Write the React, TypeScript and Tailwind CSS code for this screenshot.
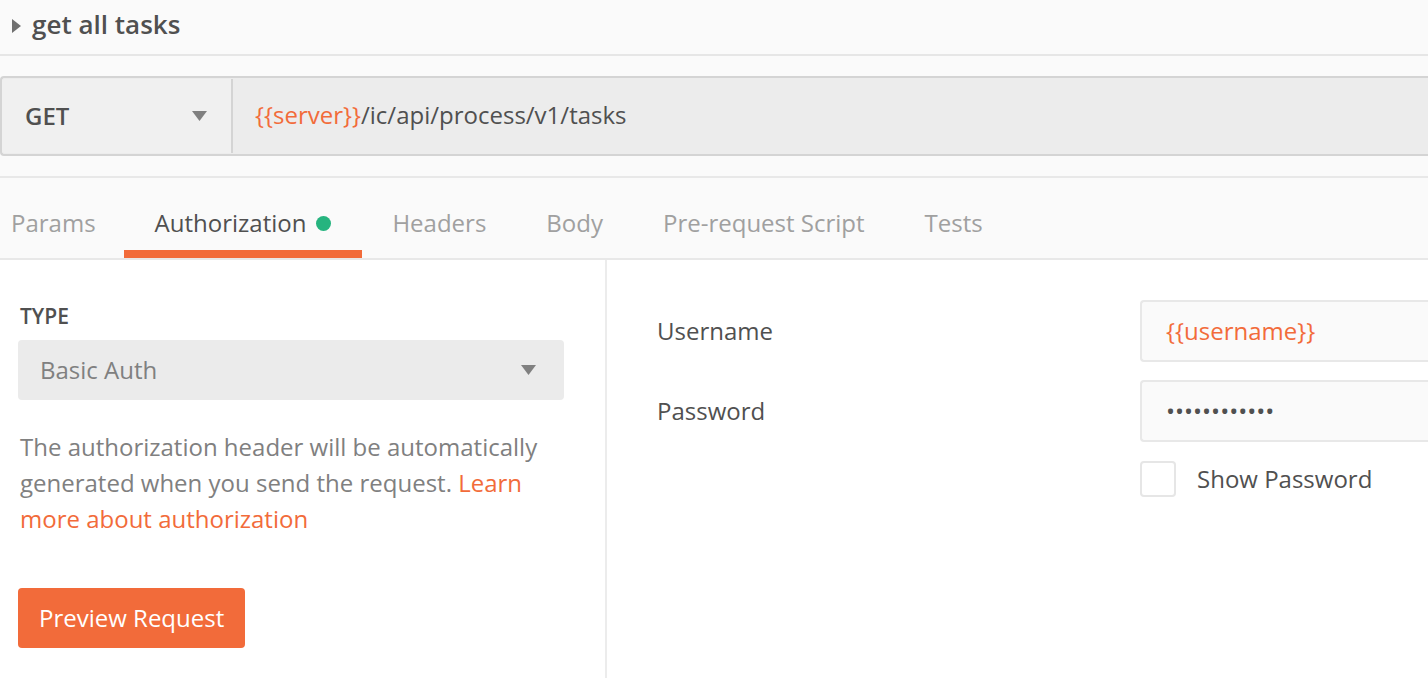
import React from "react";

const font = { fontFamily: '"Open Sans", "Noto Sans", sans-serif' };

export default function App() {
  const tabs = ["Params", "Authorization", "Headers", "Body", "Pre-request Script", "Tests"];
  return (
    <div className="w-[1428px] h-[678px] overflow-hidden bg-white text-[#505050]" style={font}>
      <div className="h-[56px] bg-[#fafafa] border-b-2 border-[#e6e6e6] flex items-center pl-[12px]">
        <svg width="9" height="14" viewBox="0 0 9 14" className="mr-[11px] mt-[-2px]">
          <path d="M0 0 L9 7 L0 14 Z" fill="#707070" />
        </svg>
        <span className="text-[26px] font-semibold text-[#505050] leading-none mb-[6px]">get all tasks</span>
      </div>
      <div className="bg-[#fafafa] py-[20px] border-b-2 border-[#e8e8e8]">
        <div className="h-[80px] bg-[#ececec] border-y-2 border-l-2 border-[#d4d4d4] rounded-l-[4px] flex">
          <div className="w-[231px] bg-[#f0f0f0] rounded-l-[3px] border-r-2 border-[#d4d4d4] flex items-center justify-between pl-[23px] pr-[24px] my-[1px]">
            <span className="text-[24px] font-semibold text-[#505050]">GET</span>
            <svg width="15" height="10" viewBox="0 0 15 10">
              <path d="M0 0 L15 0 L7.5 10 Z" fill="#808080" />
            </svg>
          </div>
          <div className="flex items-center pl-[22px] text-[24px] mt-[-2px]">
            <span className="text-[#f26b3a]">{"{{server}}"}</span>
            <span className="text-[#505050]">/ic/api/process/v1/tasks</span>
          </div>
        </div>
      </div>
      <div className="h-[82px] bg-[#fafafa] border-b-2 border-[#e8e8e8] flex items-stretch">
        {tabs.map((t) => {
          const active = t === "Authorization";
          return (
            <div
              key={t}
              className={
                active
                  ? "relative flex items-center px-[31px] pt-[10px] text-[24px] text-[#505050]"
                  : "relative flex items-center px-[30px] pt-[10px] text-[24px] text-[#a0a0a0] first:pl-[11px] first:pr-[28px]"
              }
            >
              <span>{t}</span>
              {active && <span className="ml-[10px] w-[15px] h-[15px] rounded-full bg-[#26b47f]" />}
              {active && <span className="absolute left-0 right-0 bottom-0 h-[8px] bg-[#f26b3a]" />}
            </div>
          );
        })}
      </div>
      <div className="flex h-[418px]">
        <div className="w-[607px] border-r-2 border-[#ececec] pl-[20px] pr-[41px] pt-[43px]">
          <div className="text-[21px] font-semibold text-[#505050] leading-[26px]">TYPE</div>
          <div className="mt-[11px] ml-[-2px] h-[60px] bg-[#ebebeb] rounded-[4px] flex items-center justify-between pl-[22px] pr-[28px]">
            <span className="text-[24px] text-[#808080]">Basic Auth</span>
            <svg width="15" height="10" viewBox="0 0 15 10">
              <path d="M0 0 L15 0 L7.5 10 Z" fill="#808080" />
            </svg>
          </div>
          <p className="mt-[29px] text-[24px] leading-[36px] text-[#808080]">
            The authorization header will be automatically generated when you send the request.{" "}
            <span className="text-[#f26b3a]">Learn more about authorization</span>
          </p>
          <button className="mt-[51px] ml-[-2px] h-[60px] px-[21px] bg-[#f26b3a] rounded-[4px] text-white text-[24px]">
            Preview Request
          </button>
        </div>
        <div className="flex-1 pt-[40px]">
          <div className="flex items-center h-[62px]">
            <div className="w-[533px] pl-[50px] text-[24px] text-[#505050]">Username</div>
            <div className="flex-1 h-[62px] bg-[#fafafa] border-2 border-r-0 border-[#e8e8e8] rounded-l-[4px] flex items-center pl-[24px] text-[24px] text-[#f26b3a]">
              {"{{username}}"}
            </div>
          </div>
          <div className="flex items-center h-[62px] mt-[18px]">
            <div className="w-[533px] pl-[50px] text-[24px] text-[#505050]">Password</div>
            <div className="flex-1 h-[62px] bg-[#fafafa] border-2 border-r-0 border-[#e8e8e8] rounded-l-[4px] flex items-center pl-[24px] text-[24px] text-[#505050]">
              ••••••••••••
            </div>
          </div>
          <div className="flex items-center mt-[18px] pl-[533px]">
            <div className="w-[36px] h-[36px] border-2 border-[#e6e6e6] rounded-[4px] bg-white" />
            <span className="ml-[21px] text-[24px] text-[#505050] mt-[1px]">Show Password</span>
          </div>
        </div>
      </div>
    </div>
  );
}
